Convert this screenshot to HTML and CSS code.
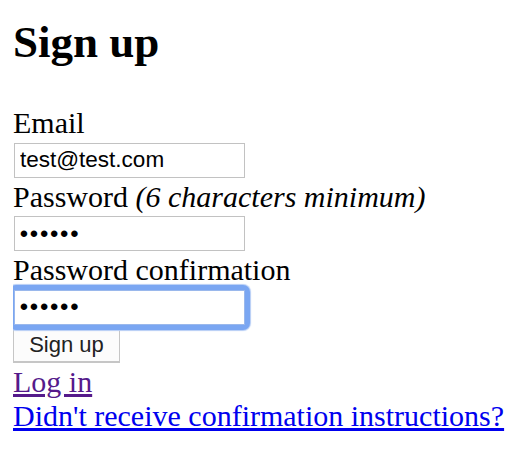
FILE: index.html
```html
<!DOCTYPE html>
<html lang="en">
<head>
<meta charset="utf-8">
<title>Sign up</title>
<link rel="stylesheet" href="styles.css">
</head>
<body>
<h2 class="title">Sign up</h2>
<form class="signup">
  <div class="field">
    <label class="label" for="email">Email</label>
    <input class="text-input" id="email" type="email" value="test@test.com">
  </div>
  <div class="field">
    <label class="label" for="pw">Password <em>(6 characters minimum)</em></label>
    <input class="text-input pw" id="pw" type="password" value="secret">
  </div>
  <div class="field">
    <label class="label" for="pwc">Password confirmation</label>
    <span class="focus-ring"><input class="text-input pw focused" id="pwc" type="password" value="secret"></span>
  </div>
  <div class="actions">
    <input class="submit" type="submit" value="Sign up">
  </div>
</form>
<div class="links">
  <a class="link visited" href="#login">Log in</a><br>
  <a class="link" href="#confirm">Didn't receive confirmation instructions?</a><br>
</div>
</body>
</html>
```
FILE: styles.css
```css
html, body {
  background: #ffffff;
}
body {
  margin: 13px;
  font-family: "Liberation Serif", "Times New Roman", serif;
  font-size: 30px;
  color: #000000;
}
.title {
  font-size: 45px;
  font-weight: bold;
  margin: 3px 0 38px 0;
}
.signup {
  margin: 0;
}
.field {
  display: flex;
  flex-direction: column;
  align-items: flex-start;
}
.label {
  display: block;
  line-height: 34.5px;
}
.label em {
  font-style: italic;
}
.text-input {
  display: block;
  box-sizing: border-box;
  width: 231px;
  height: 35px;
  margin: 2px 0 2px 1px;
  padding: 0 5px;
  border: 1px solid #c2c2c2;
  background: #ffffff;
  font-family: "Liberation Sans", Arial, sans-serif;
  font-size: 22.5px;
  color: #000000;
  outline: none;
  border-radius: 0;
}
.pw {
  letter-spacing: 2.2px;
  font-size: 22.5px;
  font-weight: bold;
}
.focus-ring {
  display: block;
  margin: -3px 0 -3px -4px;
  padding: 5px;
  border-radius: 7px;
  background: #7aa6f2;
  box-shadow: 0 0 1px 1px #b5cdf6;
}
.focus-ring .focused {
  margin: 0;
  border-color: #9ab8ec;
}
.actions {
  margin: 2px 0 2px 0;
}
.submit {
  display: block;
  box-sizing: border-box;
  width: 107px;
  height: 34px;
  margin: 0;
  padding: 0;
  border: 1px solid #c6c6c6;
  border-bottom-width: 2px;
  background: #fcfcfc;
  font-family: "Liberation Sans", Arial, sans-serif;
  font-size: 22px;
  color: #222222;
  border-radius: 0;
}
.links {
  line-height: 34.5px;
}
.link {
  color: #0000ee;
  text-decoration: underline;
}
.link.visited {
  color: #551a8b;
}
```
